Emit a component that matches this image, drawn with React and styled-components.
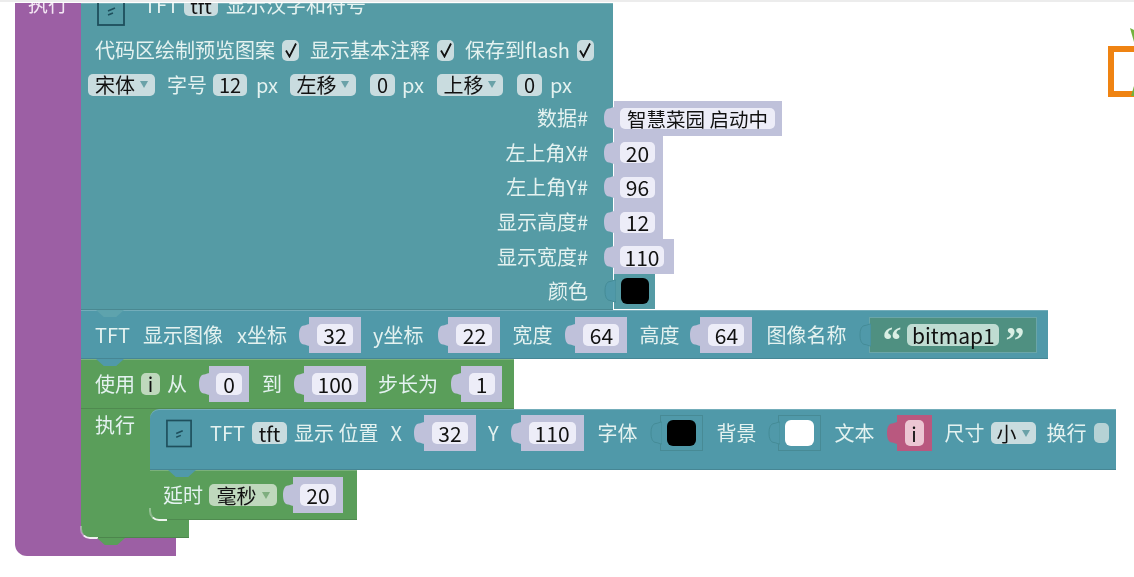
import React from "react";
import styled, { createGlobalStyle } from "styled-components";

const Global = createGlobalStyle`
  html, body { margin: 0; padding: 0; background: #fff; }
  body { font-family: "Noto Sans CJK SC", "Noto Sans", sans-serif; overflow: hidden; }
`;

const TEAL = "#559ba5";
const TEAL2 = "#5099a9";
const GREEN = "#5a9e5a";
const PURPLE = "#9c5fa4";
const LAV = "#bfc1da";

const Page = styled.div`
  position: relative;
  width: 1134px;
  height: 577px;
  box-sizing: border-box;
  border-top: 2px solid #ececec;
  padding-top: 1px;
  overflow: hidden;
  background: #fff;
  filter: blur(0.45px);
`;

const Loop = styled.div`
  margin-left: 15px;
  display: flex;
  flex-direction: column;
`;

const LoopBody = styled.div`
  display: flex;
  align-items: stretch;
`;

const Arm = styled.div`
  width: 66px;
  flex: none;
  background: ${PURPLE};
  overflow: hidden;
`;

const ArmLabel = styled.div`
  margin: -13px 0 0 13px;
  font-size: 20px;
  line-height: 28px;
  color: #f3e6f3;
`;

const LoopFoot = styled.div`
  width: 161px;
  height: 30px;
  margin-top: -12px;
  background: ${PURPLE};
  border-bottom-left-radius: 12px;
`;

const Stack = styled.div`
  display: flex;
  flex-direction: column;
  width: 1053px;
`;

const Block = styled.div`
  position: relative;
  box-sizing: border-box;
  background: ${(p) => p.$bg};
  width: ${(p) => p.$w}px;
  height: ${(p) => p.$h}px;
  border-top-left-radius: ${(p) => p.$tl ?? 0}px;
  border-bottom-left-radius: ${(p) => p.$bl ?? 0}px;
  box-shadow: inset 0 1px 0 rgba(255, 255, 255, 0.2), inset 0 -1px 0 rgba(0, 0, 0, 0.12);
`;

const Notch = styled.i`
  position: absolute;
  z-index: 3;
  left: ${(p) => p.$l ?? 15}px;
  bottom: -7px;
  width: 28px;
  height: 7px;
  background: ${(p) => p.$bg};
  clip-path: polygon(0 0, 100% 0, 72% 100%, 28% 100%);
`;

const Glint = styled.i`
  position: absolute;
  z-index: 2;
  left: -1px;
  bottom: -1px;
  box-sizing: border-box;
  width: 18px;
  height: 13px;
  border-bottom: 2px solid rgba(255, 255, 255, 0.9);
  border-left: 2px solid rgba(255, 255, 255, 0.35);
  border-bottom-left-radius: 10px;
`;

const ClipHead = styled.div`
  height: 27px;
  overflow: hidden;
`;

const HeadRow = styled.div`
  display: flex;
  align-items: flex-start;
  margin-top: -7px;
  padding-left: 16px;
`;

const Row = styled.div`
  display: flex;
  align-items: center;
  height: ${(p) => p.$h}px;
  padding-left: ${(p) => p.$pl}px;
  margin-bottom: ${(p) => p.$mb ?? 0}px;
  gap: ${(p) => p.$gap ?? 12}px;
`;

const Label = styled.span`
  font-size: 20px;
  line-height: 24px;
  color: #e4f2f0;
  white-space: nowrap;
  flex: none;
  margin-left: ${(p) => p.$ml ?? 0}px;
`;

const Field = styled.span`
  display: inline-flex;
  align-items: center;
  justify-content: center;
  box-sizing: border-box;
  width: ${(p) => p.$w}px;
  height: ${(p) => p.$h ?? 22}px;
  flex: none;
  border-radius: 5px;
  background: ${(p) => p.$bg ?? "#c9dcdf"};
  color: #111;
  font-size: ${(p) => p.$fs ?? 20}px;
  white-space: nowrap;
  margin-left: ${(p) => p.$ml ?? 0}px;
`;

const Caret = styled.span`
  width: 0;
  height: 0;
  margin-left: 5px;
  border-left: 4px solid transparent;
  border-right: 4px solid transparent;
  border-top: 7px solid ${(p) => p.$c ?? "#6aa2a8"};
`;

const Check = styled.span`
  display: inline-flex;
  align-items: center;
  justify-content: center;
  width: 17px;
  height: 21px;
  flex: none;
  margin-left: -5px;
  border-radius: 5px;
  background: #c9dcdf;
`;

const Socket = styled.span`
  position: relative;
  display: inline-flex;
  align-items: center;
  justify-content: center;
  box-sizing: border-box;
  flex: none;
  margin-left: ${(p) => p.$ml ?? 11}px;
  width: ${(p) => p.$w}px;
  height: ${(p) => p.$h ?? 36}px;
  background: ${(p) => p.$bg ?? LAV};
  border: ${(p) => (p.$line ? `1px solid ${p.$line}` : "none")};
  gap: ${(p) => p.$gap ?? 0}px;
`;

const TabSvg = styled.svg`
  position: absolute;
  left: -11px;
  top: 50%;
  transform: translateY(-50%);
  display: block;
`;

const Tab = ({ c = LAV, s = "none" }) => (
  <TabSvg width="12" height="24" viewBox="0 0 12 24">
    <path d="M12 1C9 1 8 2.5 6 2.5 2.5 2.5 1 7 1 12s1.500 9.500 5 9.500c2 0 3 1.500 6 1.500z" fill={c} stroke={s} />
  </TabSvg>
);

const Swatch = styled.span`
  width: ${(p) => p.$w ?? 29}px;
  height: ${(p) => p.$h ?? 26}px;
  border-radius: 6px;
  background: ${(p) => p.$c};
`;

const Quote = styled.span`
  font-family: "Liberation Serif", serif;
  font-weight: 700;
  font-size: 38px;
  line-height: 20px;
  color: #d9efe4;
  margin-top: 10px;
`;

const ValueRow = styled.div`
  display: grid;
  grid-template-columns: 507px auto;
  column-gap: 15px;
  align-items: center;
  justify-content: start;
  height: 34.6px;
`;

const RightLabel = styled(Label)`
  text-align: right;
`;

const Socketed = ({ w, fw, children, ml = 11 }) => (
  <Socket $w={w} $ml={ml}>
    <Tab />
    <Field $w={fw} $h={22} $fs={21} $bg="#ededf8">{children}</Field>
  </Socket>
);

const ValueSocket = styled(Socket)`
  justify-content: flex-start;
  padding-left: 6px;
  height: 34.6px;
`;

const DataValue = ({ w, fw, fs = 21, children }) => (
  <ValueSocket $w={w} $h={35}>
    <Tab />
    <Field $w={fw} $h={21} $fs={fs} $bg="#ededf8">{children}</Field>
  </ValueSocket>
);

const ColorSocket = ({ c, ml = 11, w = 43, h = 36, bg = "transparent", line = "#478a95", sw = 29 }) => (
  <Socket $w={w} $h={h} $bg={bg} $line={line} $ml={ml}>
    <Tab c={TEAL2} s="#458c97" />
    <Swatch $c={c} $w={sw} />
  </Socket>
);

const LoopInner = styled.div`
  display: flex;
`;

const LoopGutter = styled.div`
  width: 78px;
  flex: none;
  padding: 4px 0 0 14px;
  box-sizing: border-box;
  background: ${GREEN};
`;

const InnerStack = styled.div`
  position: relative;
  width: 966px;
  flex: none;
  margin-left: -9px;
`;

const HeadTall = styled.div`
  display: flex;
  align-items: center;
  height: 61px;
  padding-bottom: 13px;
  box-sizing: border-box;
  padding-left: 16px;
`;

const GreenFoot = styled.div`
  position: relative;
  z-index: 1;
  width: 108px;
  height: 18px;
  background: ${GREEN};
  border-bottom-left-radius: 10px;
  box-shadow: inset 0 -1px 0 rgba(0, 0, 0, 0.15);
`;

const Flag = styled.svg`
  flex: none;
  display: block;
`;

const TftIcon = ({ w = 28, h = 30 }) => (
  <Flag width={w} height={h} viewBox="0 0 28 30" fill="none">
    <rect x="1" y="1" width="26" height="28" stroke="#1e4f5c" strokeWidth="1.800" />
    <path d="M11 15l7-3M11 19l5-2" stroke="#1e4f5c" strokeWidth="1.600" />
  </Flag>
);

const Logo = styled.svg`
  position: absolute;
  right: 0;
  top: 22px;
`;

const CheckMark = () => (
  <svg width="14" height="16" viewBox="0 0 14 16" fill="none">
    <path d="M2 8.500l3.500 6L12 1.500" stroke="#111" strokeWidth="1.800" />
  </svg>
);

const HeadShift = styled.div`
  margin: ${(p) => p.$mt ?? -3}px 0 0 ${(p) => p.$ml}px;
  flex: none;
`;

export default function App() {
  return (
    <Page>
      <Global />
      <Loop>
        <LoopBody>
          <Arm>
            <ArmLabel>执行</ArmLabel>
          </Arm>
          <Stack>
            <Block $bg={TEAL} $w={532} $h={307}>
              <Notch $bg="#5ea3ad" />
              <ClipHead>
                <HeadRow>
                  <TftIcon />
                  <HeadShift $ml={19}><Label>TFT</Label></HeadShift>
                  <HeadShift $ml={5} $mt={-2}><Field $w={34} $h={22}>tft</Field></HeadShift>
                  <HeadShift $ml={8}><Label>显示汉字和符号</Label></HeadShift>
                </HeadRow>
              </ClipHead>
              <Row $h={40} $pl={14}>
                <Label>代码区绘制预览图案</Label>
                <Check><CheckMark /></Check>
                <Label $ml={-1}>显示基本注释</Label>
                <Check><CheckMark /></Check>
                <Label $ml={-1}>保存到flash</Label>
                <Check><CheckMark /></Check>
              </Row>
              <Row $h={29} $mb={2} $pl={7}>
                <Field $w={67}>宋体<Caret /></Field>
                <Label>字号</Label>
                <Field $w={34} $ml={-6}>12</Field>
                <Label $ml={-3}>px</Label>
                <Field $w={66}>左移<Caret /></Field>
                <Field $w={25} $ml={2}>0</Field>
                <Label $ml={-5}>px</Label>
                <Field $w={66} $ml={1}>上移<Caret /></Field>
                <Field $w={25} $ml={2}>0</Field>
                <Label $ml={-4}>px</Label>
              </Row>
              <ValueRow>
                <RightLabel>数据#</RightLabel>
                <DataValue w={168} fw={155} fs={19.5}>智慧菜园 启动中</DataValue>
              </ValueRow>
              <ValueRow>
                <RightLabel>左上角X#</RightLabel>
                <DataValue w={49} fw={35}>20</DataValue>
              </ValueRow>
              <ValueRow>
                <RightLabel>左上角Y#</RightLabel>
                <DataValue w={49} fw={35}>96</DataValue>
              </ValueRow>
              <ValueRow>
                <RightLabel>显示高度#</RightLabel>
                <DataValue w={49} fw={35}>12</DataValue>
              </ValueRow>
              <ValueRow>
                <RightLabel>显示宽度#</RightLabel>
                <DataValue w={60} fw={44}>110</DataValue>
              </ValueRow>
              <ValueRow>
                <RightLabel>颜色</RightLabel>
                <ColorSocket c="#000" w={41} h={35} bg={TEAL} line={TEAL} sw={28} />
              </ValueRow>
            </Block>

            <Block $bg={TEAL2} $w={967} $h={49}>
              <Notch $bg={TEAL2} />
              <Row $h={49} $pl={14}>
                <Label>TFT</Label>
                <Label $ml={1}>显示图像</Label>
                <Label $ml={2}>x坐标</Label>
                <Socketed w={52} fw={36} ml={10}>32</Socketed>
                <Label>y坐标</Label>
                <Socketed w={52} fw={36} ml={13}>22</Socketed>
                <Label>宽度</Label>
                <Socketed w={52} fw={36}>64</Socketed>
                <Label>高度</Label>
                <Socketed w={52} fw={36} ml={9}>64</Socketed>
                <Label $ml={2}>图像名称</Label>
                <Socket $w={168} $ml={11} $bg="#4f9081" $line="#6aa5a8" $h={36} $gap={6}>
                  <Tab c={TEAL2} s="#458c97" />
                  <Quote>“</Quote>
                  <Field $w={92} $h={22} $fs={21} $bg="#bfdcd2">bitmap1</Field>
                  <Quote>”</Quote>
                </Socket>
              </Row>
            </Block>

            <Block $bg={GREEN} $w={433} $h={50}>
              <Row $h={49} $pl={14}>
                <Label>使用</Label>
                <Field $w={19} $h={22} $bg="#bfd8bd" $ml={-6}>i</Field>
                <Label $ml={-5}>从</Label>
                <Socketed w={40} fw={26} ml={10}>0</Socketed>
                <Label $ml={1}>到</Label>
                <Socketed w={62} fw={46} ml={10}>100</Socketed>
                <Label>步长为</Label>
                <Socketed w={41} fw={26}>1</Socketed>
              </Row>
            </Block>

            <LoopInner>
              <LoopGutter><Label>执行</Label></LoopGutter>
              <InnerStack>
                <Block $bg={TEAL2} $w={966} $h={61} $tl={9}>
                  <Notch $bg={TEAL2} $l={18} />
                  <HeadTall>
                    <TftIcon w={26} h={31} />
                    <Label $ml={18}>TFT</Label>
                    <Field $w={35} $ml={7}>tft</Field>
                    <Label $ml={7}>显示 位置</Label>
                    <Label $ml={12}>X</Label>
                    <Socketed w={52} fw={36} ml={22}>32</Socketed>
                    <Label $ml={12}>Y</Label>
                    <Socketed w={63} fw={47} ml={22}>110</Socketed>
                    <Label $ml={14}>字体</Label>
                    <ColorSocket c="#000" ml={22} />
                    <Label $ml={14}>背景</Label>
                    <ColorSocket c="#fff" ml={21} />
                    <Label $ml={14}>文本</Label>
                    <Socket $w={35} $ml={22} $bg="#b9587f">
                      <Tab c="#b9587f" />
                      <Field $w={19} $h={26} $bg="#ecc6d3">i</Field>
                    </Socket>
                    <Label $ml={13}>尺寸</Label>
                    <Field $w={45} $ml={6}>小<Caret /></Field>
                    <Label $ml={11}>换行</Label>
                    <Field $w={15} $h={20} $ml={7} $bg="#b6d2d5" />
                  </HeadTall>
                </Block>
                <Block $bg={GREEN} $w={207} $h={50} $bl={9}>
                  <Glint />
                  <Row $h={50} $pl={13} $gap={8}>
                    <Label>延时</Label>
                    <Field $w={68} $h={22} $bg="#bfd8bd" $ml={-2}>毫秒<Caret $c="#7fae7f" /></Field>
                    <Socketed w={50} fw={36} ml={8}>20</Socketed>
                  </Row>
                </Block>
              </InnerStack>
            </LoopInner>

            <GreenFoot>
              <Glint />
              <Notch $bg={GREEN} $l={16} />
            </GreenFoot>
          </Stack>
        </LoopBody>
        <LoopFoot />
      </Loop>
      <Logo width="26" height="74" viewBox="0 0 26 74" fill="none">
        <rect x="3" y="25" width="40" height="45" stroke="#ef8312" strokeWidth="6" />
        <path d="M22 4l4 14V6z" fill="#73b23e" />
        <path d="M26 62l-3 10h3z" fill="#73b23e" />
      </Logo>
    </Page>
  );
}
